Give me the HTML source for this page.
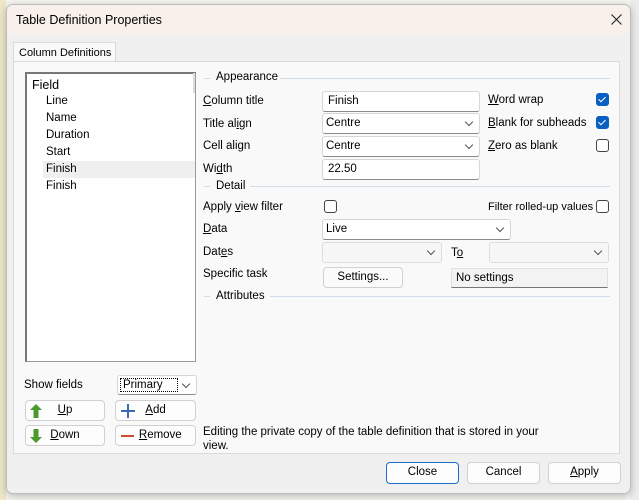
<!DOCTYPE html>
<html><head><meta charset="utf-8"><style>
*{box-sizing:border-box;margin:0;padding:0}
body{width:639px;height:500px;overflow:hidden;position:relative;background:#f4f4f0;font-family:"Liberation Sans",sans-serif;font-size:11.5px;color:#000}
.a{position:absolute;white-space:nowrap}
.inp{position:absolute;background:#fff;border:1px solid #d6d6d6;border-bottom-color:#8a8a8a;border-radius:3px;padding:3px 5px;height:21px}
.dd::after{content:"";position:absolute;right:7px;top:5px;width:5px;height:5px;border-right:1px solid #555;border-bottom:1px solid #555;transform:rotate(45deg)}
.dis{background:#f7f7f7;border-color:#ddd}
.cb{position:absolute;width:13px;height:13px;border:1px solid #444;border-radius:3px;background:#fff}
.cb.on{background:#0a5fc2;border-color:#0a5fc2}
.cb.on::after{content:"";position:absolute;left:3px;top:1px;width:3px;height:6px;border-right:1.3px solid #fff;border-bottom:1.3px solid #fff;transform:rotate(45deg)}
.btn{position:absolute;background:#fdfdfd;border:1px solid #d0d0d0;border-radius:4px;text-align:center;line-height:19px}
.hl{position:absolute;height:1px;background:#d2dce6}
u{text-decoration:underline}
svg{position:absolute}
</style></head><body>
<div class="a" style="left:0;top:0;width:639px;height:500px;background:repeating-linear-gradient(0deg,transparent 0 23px,#c8c8c8 23px 24px)"></div>
<div class="a" style="left:630px;top:0;width:9px;height:500px;background:#ececec"></div>
<div class="a" style="left:0;top:0;width:6px;height:500px;background:#ede7c8"></div>
<div class="a" style="left:6px;top:4px;width:625px;height:490px;background:#f0f0f0;border:1px solid #bdbdbd;border-radius:7px;box-shadow:0 2px 8px rgba(0,0,0,.25);overflow:hidden">
 <div class="a" style="left:0;top:0;width:625px;height:29px;background:#f8f0ea"></div>
 <div class="a" style="left:9px;top:8px;font-size:12.5px">Table Definition Properties</div>
 <svg style="left:604px;top:9px" width="11" height="11"><path d="M0.5 0.5L10.5 10.5M10.5 0.5L0.5 10.5" stroke="#222" stroke-width="1.1"/></svg>
</div>
<div class="a" style="left:13px;top:42px;width:103px;height:21px;background:#f9f9f9;border:1px solid #dadada;border-bottom:none;padding:4px 5px;font-size:11px">Column Definitions</div>
<div class="a" style="left:13px;top:61px;width:607px;height:393px;background:#f9f9f9;border:1px solid #dadada"></div>
<div class="a" style="left:116px;top:61px;width:1px;height:1px;background:#dadada"></div>
<div class="a" style="left:25px;top:72px;width:171px;height:290px;background:#fff;border:1px solid #9a9a9a;border-top:2px solid #777;border-left:2px solid #777"></div>
<div class="a" style="left:193px;top:73px;width:2px;height:20px;background:#ddd"></div>
<div class="a" style="left:43px;top:161px;width:152px;height:17px;background:#efefef"></div>
<div class="a" style="left:32px;top:78px;font-size:12.5px">Field</div>
<div class="a" style="left:46px;top:95px">Line</div>
<div class="a" style="left:46px;top:112px">Name</div>
<div class="a" style="left:46px;top:129px">Duration</div>
<div class="a" style="left:46px;top:146px">Start</div>
<div class="a" style="left:46px;top:163px">Finish</div>
<div class="a" style="left:46px;top:180px">Finish</div>
<div class="a" style="left:24px;top:379px">Show fields</div>
<div class="inp dd" style="left:117px;top:375px;width:80px;height:20px;padding:2px 2px"><span style="border:1px dotted #000;padding:0 2px;display:inline-block;width:58px">Primary</span></div>
<div class="btn" style="left:25px;top:400px;width:80px;height:21px"><svg style="left:4px;top:3px" width="12" height="14"><path d="M6 0L12 6H8.5V14H3.5V6H0Z" fill="#4a9a2e"/></svg><u>U</u>p</div>
<div class="btn" style="left:115px;top:400px;width:81px;height:21px"><svg style="left:5px;top:3px" width="14" height="14"><path d="M7 0V14M0 7H14" stroke="#3a6ab0" stroke-width="2"/></svg><u>A</u>dd</div>
<div class="btn" style="left:25px;top:425px;width:80px;height:21px"><svg style="left:4px;top:3px" width="12" height="14"><path d="M6 14L12 8H8.5V0H3.5V8H0Z" fill="#4a9a2e"/></svg><u>D</u>own</div>
<div class="btn" style="left:115px;top:425px;width:81px;height:21px"><span style="position:absolute;left:5px;top:9px;width:13px;height:2px;background:#d24a2c"></span>&nbsp;&nbsp;&nbsp;<u>R</u>emove</div>
<div class="a" style="left:203px;top:425px;line-height:14px">Editing the private copy of the table definition that is stored in your<br>view.</div>
<div class="hl" style="left:204px;top:78px;width:6px"></div><div class="a" style="left:216px;top:71px">Appearance</div><div class="hl" style="left:280px;top:78px;width:330px"></div>
<div class="hl" style="left:204px;top:186px;width:6px"></div><div class="a" style="left:216px;top:180px">Detail</div><div class="hl" style="left:250px;top:186px;width:360px"></div>
<div class="hl" style="left:204px;top:296px;width:6px"></div><div class="a" style="left:216px;top:290px">Attributes</div><div class="hl" style="left:270px;top:296px;width:340px"></div>
<div class="a" style="left:203px;top:95px"><u>C</u>olumn title</div>
<div class="a" style="left:203px;top:118px">Title al<u>i</u>gn</div>
<div class="a" style="left:203px;top:140px">Cell ali<u>g</u>n</div>
<div class="a" style="left:203px;top:163px">Wi<u>d</u>th</div>
<div class="a" style="left:203px;top:201px">Apply <u>v</u>iew filter</div>
<div class="a" style="left:203px;top:223px"><u>D</u>ata</div>
<div class="a" style="left:203px;top:246px">Dat<u>e</u>s</div>
<div class="a" style="left:203px;top:268px">Specific task</div>
<div class="inp" style="left:322px;top:91px;width:158px">Finish</div>
<div class="inp dd" style="left:322px;top:113px;width:158px;padding-left:3px">Centre</div>
<div class="inp dd" style="left:322px;top:136px;width:158px;padding-left:3px">Centre</div>
<div class="inp" style="left:322px;top:159px;width:158px">22.50</div>
<div class="a" style="left:488px;top:94px"><u>W</u>ord wrap</div>
<div class="a" style="left:488px;top:117px"><u>B</u>lank for subheads</div>
<div class="a" style="left:488px;top:140px"><u>Z</u>ero as blank</div>
<div class="cb on" style="left:596px;top:93px"></div>
<div class="cb on" style="left:596px;top:116px"></div>
<div class="cb" style="left:596px;top:139px"></div>
<div class="cb" style="left:324px;top:200px"></div>
<div class="a" style="left:488px;top:201px;font-size:11px">Filter rolled-up values</div>
<div class="cb" style="left:596px;top:200px"></div>
<div class="inp dd" style="left:322px;top:219px;width:189px;padding-left:3px">Live</div>
<div class="inp dd dis" style="left:322px;top:242px;width:120px"></div>
<div class="a" style="left:451px;top:247px">T<u>o</u></div>
<div class="inp dd dis" style="left:489px;top:242px;width:120px"></div>
<div class="btn" style="left:323px;top:267px;width:80px;height:21px;background:#fbfbfb">Settings...</div>
<div class="a" style="left:451px;top:268px;width:157px;height:20px;background:#f3f3f3;border:1px solid #e0e0e0;border-bottom-color:#777;padding:3px 4px">No settings</div>
<div class="btn" style="left:386px;top:462px;width:73px;height:22px;border:1.5px solid #1a6fc9">Close</div>
<div class="btn" style="left:467px;top:462px;width:73px;height:22px">Cancel</div>
<div class="btn" style="left:548px;top:462px;width:73px;height:22px"><u>A</u>pply</div>
</body></html>
